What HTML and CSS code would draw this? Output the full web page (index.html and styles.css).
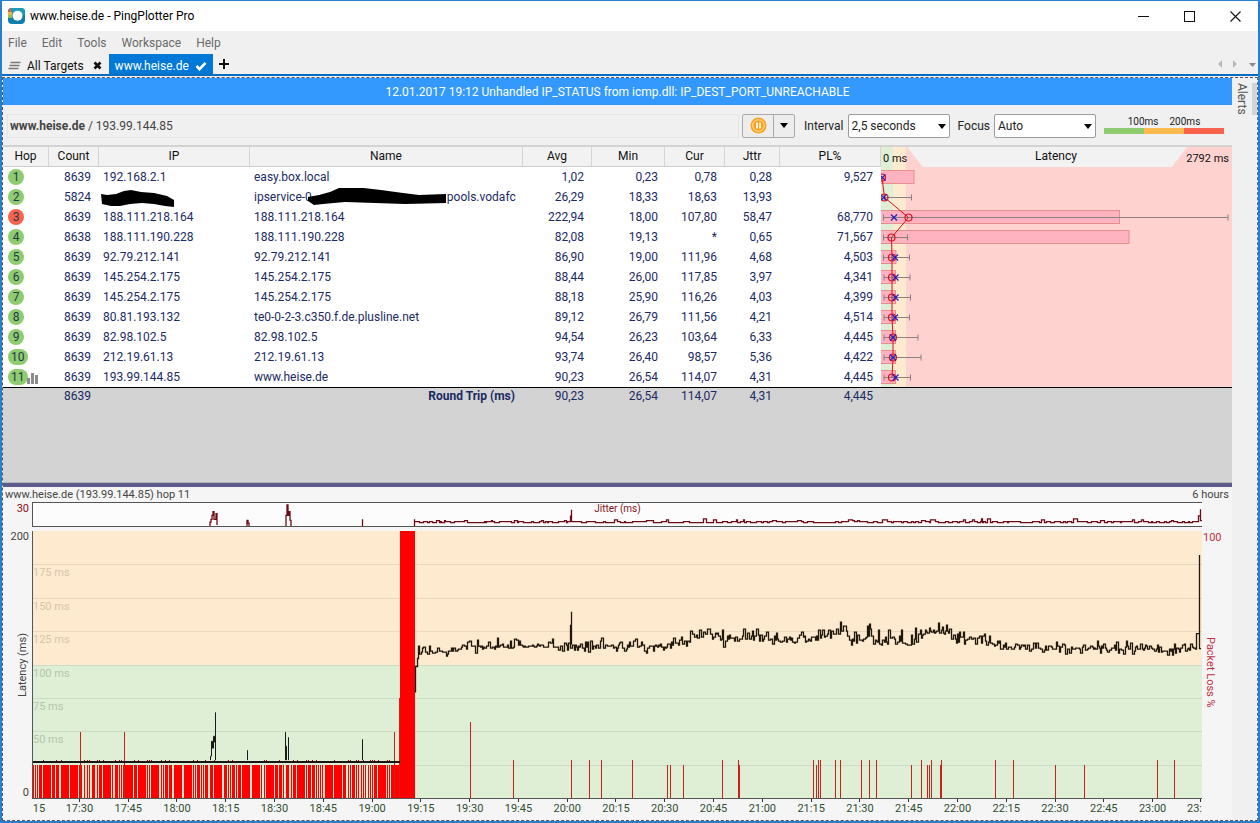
FILE: index.html
```html
<!DOCTYPE html>
<html lang="en">
<head>
<meta charset="utf-8">
<title>www.heise.de - PingPlotter Pro</title>
<link rel="stylesheet" href="styles.css">
</head>
<body>
<div class="window">
  <header class="titlebar">
    <svg class="logo" viewBox="0 0 17 17" width="17" height="17">
      <rect x="0" y="0" width="17" height="16" rx="4" fill="#127fae"/>
      <path d="M4 0h9a4 4 0 0 1 4 4v3H0V4a4 4 0 0 1 4-4z" fill="#1b9bb8"/>
      <path d="M0 5V4a4 4 0 0 1 3-3.900V5z" fill="#e2603f"/>
      <rect x="0" y="4" width="4" height="3" fill="#f2b43c"/>
      <rect x="0" y="7" width="4" height="3" fill="#8fc35a"/>
      <circle cx="9.500" cy="7.800" r="5" fill="#fff"/>
    </svg>
    <h1 class="title">www.heise.de - PingPlotter Pro</h1>
    <div class="winbtns">
      <button class="winbtn" aria-label="Minimize"><svg width="11" height="11"><path d="M0 5.500h11" stroke="#111"/></svg></button>
      <button class="winbtn" aria-label="Maximize"><svg width="11" height="11"><rect x=".5" y=".5" width="10" height="10" fill="none" stroke="#111"/></svg></button>
      <button class="winbtn" aria-label="Close"><svg width="11" height="11"><path d="M.5.5l10 10M10.500.5l-10 10" stroke="#111" stroke-width="1.100"/></svg></button>
    </div>
  </header>
  <nav class="menu">
    <button>File</button><button>Edit</button><button>Tools</button><button>Workspace</button><button>Help</button>
  </nav>
  <div class="tabs">
    <button class="tab">
      <svg width="13" height="10"><path d="M2.500 1.500h10M1.500 4.500h10M.5 7.500h10" stroke="#777" stroke-width="1.500"/></svg>
      All Targets
      <svg class="tabend" width="9" height="9"><path d="M1.500 1.500l6 6M7.500 1.500l-6 6" stroke="#111" stroke-width="2.600"/></svg>
    </button>
    <button class="tab active">
      www.heise.de
      <svg width="12" height="10"><path d="M1.500 5l3 3.200L10.500 1.800" fill="none" stroke="#fff" stroke-width="2.600"/></svg>
    </button>
    <button class="plus" aria-label="New tab"><svg width="10" height="10"><path d="M0 5h10M5 0v10" stroke="#111" stroke-width="2"/></svg></button>
    <div class="tabnav">
      <svg width="40" height="10"><path d="M4 1v8L0 5zM15 1v8l4-4z" fill="#b9b9b9"/><path d="M31 4h7l-3.500 4z" fill="#8a8a8a"/></svg>
    </div>
  </div>

  <div class="body">
    <main class="main">
      <div class="banner">12.01.2017 19:12 Unhandled IP_STATUS from icmp.dll: IP_DEST_PORT_UNREACHABLE</div>
      <div class="toolbar">
        <div class="target"><b>www.heise.de</b> / 193.99.144.85</div>
        <div class="split">
          <button class="pause" aria-label="Pause"><svg width="17" height="17"><circle cx="8.500" cy="8.500" r="8" fill="#fba31c"/><circle cx="8.500" cy="8.500" r="5.800" fill="none" stroke="#fff" stroke-opacity=".7"/><path d="M7 5.500v6M10 5.500v6" stroke="#fff" stroke-width="1.600"/></svg></button>
          <button class="drop" aria-label="More"><span class="tri"></span></button>
        </div>
        <label for="interval">Interval</label>
        <span class="combo"><select id="interval"><option>2,5 seconds</option></select></span>
        <label for="focus">Focus</label>
        <span class="combo"><select id="focus"><option>Auto</option></select></span>
        <div class="scale">
          <div class="scaletext"><span>100ms</span><span>200ms</span></div>
          <div class="scalebar"><i class="good"></i><i class="warn"></i><i class="bad"></i></div>
        </div>
      </div>

      <section class="trace">
        <table class="hops">
          <colgroup><col class="c-hop"><col class="c-count"><col class="c-ip"><col class="c-name"><col class="c-avg"><col class="c-min"><col class="c-cur"><col class="c-jttr"><col class="c-pl"></colgroup>
          <thead><tr><th>Hop</th><th>Count</th><th>IP</th><th>Name</th><th>Avg</th><th>Min</th><th>Cur</th><th>Jttr</th><th>PL%</th></tr></thead>
          <tbody>
            <tr><td><span class="hop">1</span></td><td>8639</td><td>192.168.2.1</td><td>easy.box.local</td><td>1,02</td><td>0,23</td><td>0,78</td><td>0,28</td><td>9,527</td></tr>
            <tr><td><span class="hop">2</span></td><td>5824</td>
              <td><svg class="mark" width="74" height="18" viewBox="0 0 74 18"><path d="M0 5l6 1 9-1 8-3 7-1 10 2 13 1 13 3 7 4v7l-9-1-11-2-12-1-12 1-10 2-9 0-9-2z"/></svg></td>
              <td><span class="masked">ipservice-0<svg class="mark name" width="138" height="18" viewBox="0 0 138 18"><path d="M0 9l11-2 11-3 9-4 16-1 26 3 22 3 16 2 27-1v9l-41 1-60-2-22 2-9 1-6-4z"/></svg>pools.vodafc</span></td>
              <td>26,29</td><td>18,33</td><td>18,63</td><td>13,93</td><td></td></tr>
            <tr><td><span class="hop bad">3</span></td><td>8639</td><td>188.111.218.164</td><td>188.111.218.164</td><td>222,94</td><td>18,00</td><td>107,80</td><td>58,47</td><td>68,770</td></tr>
            <tr><td><span class="hop">4</span></td><td>8638</td><td>188.111.190.228</td><td>188.111.190.228</td><td>82,08</td><td>19,13</td><td>*</td><td>0,65</td><td>71,567</td></tr>
            <tr><td><span class="hop">5</span></td><td>8639</td><td>92.79.212.141</td><td>92.79.212.141</td><td>86,90</td><td>19,00</td><td>111,96</td><td>4,68</td><td>4,503</td></tr>
            <tr><td><span class="hop">6</span></td><td>8639</td><td>145.254.2.175</td><td>145.254.2.175</td><td>88,44</td><td>26,00</td><td>117,85</td><td>3,97</td><td>4,341</td></tr>
            <tr><td><span class="hop">7</span></td><td>8639</td><td>145.254.2.175</td><td>145.254.2.175</td><td>88,18</td><td>25,90</td><td>116,26</td><td>4,03</td><td>4,399</td></tr>
            <tr><td><span class="hop">8</span></td><td>8639</td><td>80.81.193.132</td><td>te0-0-2-3.c350.f.de.plusline.net</td><td>89,12</td><td>26,79</td><td>111,56</td><td>4,21</td><td>4,514</td></tr>
            <tr><td><span class="hop">9</span></td><td>8639</td><td>82.98.102.5</td><td>82.98.102.5</td><td>94,54</td><td>26,23</td><td>103,64</td><td>6,33</td><td>4,445</td></tr>
            <tr><td><span class="hop">10</span></td><td>8639</td><td>212.19.61.13</td><td>212.19.61.13</td><td>93,74</td><td>26,40</td><td>98,57</td><td>5,36</td><td>4,422</td></tr>
            <tr><td><span class="hop">11</span><svg class="bars" width="12" height="12"><path d="M0 6h3v6H0zM4 1h3v11H4zM8 3h3v9H8z" fill="#8c8c8c"/></svg></td><td>8639</td><td>193.99.144.85</td><td>www.heise.de</td><td>90,23</td><td>26,54</td><td>114,07</td><td>4,31</td><td>4,445</td></tr>
          </tbody>
          <tfoot><tr><td></td><td>8639</td><td></td><th scope="row">Round Trip (ms)</th><td>90,23</td><td>26,54</td><td>114,07</td><td>4,31</td><td>4,445</td></tr></tfoot>
        </table>
        <div class="latency">
          <svg class="latgraph" id="latgraph" viewBox="0 0 351 240" preserveAspectRatio="none"></svg>
          <div class="lathead"><small>0 ms</small><span>Latency</span><small>2792 ms</small></div>
        </div>
      </section>

      <div class="splitter"></div>

      <section class="timeline">
        <div class="caption"><span>www.heise.de (193.99.144.85) hop 11</span><span>6 hours</span></div>
        <div class="chart">
          <div class="jmax">30</div>
          <div class="jitter"><svg id="jitter" viewBox="0 0 1169 24" preserveAspectRatio="none"></svg><span>Jitter (ms)</span></div>
          <div class="yaxis"><span>200</span><span class="vert up">Latency (ms)</span><span>0</span></div>
          <div class="plot">
            <div class="warn"></div><div class="warn">175 ms</div><div class="warn">150 ms</div><div class="warn">125 ms</div>
            <div>100 ms</div><div>75 ms</div><div>50 ms</div><div>25 ms</div>
            <svg id="plot" viewBox="0 0 1169 268" preserveAspectRatio="none"></svg>
          </div>
          <div class="loss"><span>100</span><span class="vert">Packet Loss %</span></div>
          <div class="xaxis" id="xaxis"></div>
        </div>
      </section>
    </main>
    <aside class="side"><button class="alerts">Alerts</button><span class="handle"></span></aside>
  </div>
</div>
<script src="app.js"></script>
</body>
</html>
```
FILE: styles.css
```css
* { box-sizing: border-box; }
body { margin: 0; font: 12px/20px Roboto, sans-serif; color: #222; }
button { font: inherit; color: inherit; background: none; border: 0; padding: 0; }
svg { display: block; }

.window { min-height: 100vh; display: flex; flex-direction: column; background: #f0f0f0; border: 2px solid #2a7fc9; border-top-width: 1px; }

.titlebar { display: flex; align-items: center; height: 30px; background: #fff; padding-left: 6px; }
.title { flex: 1; margin: 0 0 0 5px; font-size: 12px; font-weight: 400; line-height: 20px; color: #000; }
.winbtns { display: flex; }
.winbtn { width: 46px; height: 30px; display: grid; place-items: center; }

.menu { display: flex; gap: 15px; height: 23px; padding-left: 6px; line-height: 24px; color: #6a6a6a; }

.tabs { display: flex; height: 22px; border-bottom: 2px solid #0a6cbe; color: #111; }
.tab { display: flex; align-items: center; gap: 6px; padding: 3px 7px 0 6px; }
.tab.active { background: #0078d7; color: #fff; padding: 3px 6px 0; }
.tabend { margin-left: 3px; }
.plus { padding: 0 6px; }
.tabnav { margin-left: auto; display: flex; align-items: center; }

.body { flex: 1; display: flex; margin-top: 1px; border: 1px dashed #556; border-right-color: #668; }
.main { flex: 1; min-width: 0; display: flex; flex-direction: column; }
.side { width: 25px; display: flex; padding-top: 5px; }
.alerts { flex: 1; height: 32px; writing-mode: vertical-rl; color: #555; }
.handle { width: 5px; height: 32px; background: #d4d4d8; }

.banner { height: 27px; background: #39f; color: #fff; text-align: center; line-height: 28px; }

.toolbar { display: flex; align-items: center; height: 40px; padding: 1px 8px 0 4px; }
.target { flex: 1; height: 24px; border: 1px solid #e4e6e6; padding-left: 2px; line-height: 23px; color: #444; }
.split { display: flex; width: 53px; height: 24px; margin: 0 9px 0 3px; border: 1px solid #aaa; border-radius: 2px; background: #ededed; }
.pause { flex: 3; display: grid; place-items: center; border-right: 1px solid #aaa; }
.drop { flex: 2; display: grid; place-items: center; }
.tri { border: 4px solid transparent; border-top: 5px solid #000; border-bottom: 0; }
.combo { position: relative; width: 102px; margin: 0 8px 0 4px; }
.combo::after { content: ""; position: absolute; right: 4px; top: 10px; border: 4px solid transparent; border-top: 5px solid #000; border-bottom: 0; pointer-events: none; }
.combo select { display: block; width: 100%; height: 24px; appearance: none; border: 1px solid #9c9c9c; border-radius: 2px; background: #fff; padding: 0 3px; font: 12px Roboto, sans-serif; color: #222; }
.scale { width: 120px; font-size: 10px; line-height: 12px; }
.scaletext { display: flex; justify-content: center; gap: 11px; height: 11px; line-height: 10px; }
.scalebar { display: flex; height: 6px; }
.scalebar i { flex: 1; }
.good { background: #8fcb6f; }
.scalebar .warn { background: #ffba4f; }
.scalebar .bad { background: #f9634d; }

.trace { flex: 1; display: flex; align-items: flex-start; min-height: 300px; border-top: 2px solid #d3d3d3; background: #d3d3d3; }
.hops { width: 878px; table-layout: fixed; border-collapse: separate; border-spacing: 0; color: #1b2a63; }
.c-hop { width: 46px; } .c-count { width: 50px; } .c-ip { width: 151px; } .c-name { width: 273px; }
.c-avg { width: 69px; } .c-min { width: 73px; } .c-cur { width: 60px; } .c-jttr { width: 55px; }
.hops th, .hops td { height: 20px; padding: 0 8px; text-align: right; line-height: 20px; white-space: nowrap; }
.hops thead th { background: #f2f2f2; border-right: 1px solid #d4d4d4; border-bottom: 1px solid #ccc; padding: 0; line-height: 19px; text-align: center; font-weight: 400; color: #111; }
.hops tbody td { background: #fff; padding-top: 1px; line-height: 19px; }
.hops td:nth-child(1) { padding-left: 5px; padding-top: 0; text-align: left; }
.hops td:nth-child(3), .hops td:nth-child(4) { padding-left: 4px; text-align: left; }
.hops td:nth-child(6) { padding-right: 7px; }
.hops tfoot td, .hops tfoot th { border-top: 1px solid #000; padding-bottom: 2px; line-height: 17px; }
.hop { display: inline-block; min-width: 16px; height: 16px; padding: 0 3px; border-radius: 8px; background: #8fcb6f; line-height: 16px; text-align: center; color: #1b3b4b; vertical-align: top; margin-top: 1px; }
.hop.bad { background: #f9634d; }
.bars { display: inline-block; vertical-align: top; margin: 4px 0 0 -1px; }
.mark { margin-left: -2px; overflow: visible; }
.masked { display: flex; width: 262px; height: 19px; overflow: hidden; }
.mark.name { flex: none; margin: 0 1px 0 -4px; }

.latency { flex: 1; min-width: 0; position: relative; height: 241px; border-bottom: 1px solid #000; color: #111; }
.latgraph { width: 100%; height: 240px; }
.lathead { position: absolute; top: 0; left: 0; right: 0; display: flex; justify-content: space-between; padding: 0 3px 0 2px; line-height: 19px; }
.lathead small { width: 60px; font-size: 11px; line-height: 23px; }
.lathead small:last-child { text-align: right; }

.splitter { height: 5px; background: #5d5b8c; border-top: 1px solid #b4b8ba; }

.timeline { background: #f5f5f5; font-size: 11px; color: #444; }
.caption { display: flex; justify-content: space-between; padding: 0 3px 0 2px; height: 15px; line-height: 15px; }
.chart { display: grid; grid-template-columns: 29px minmax(0, 1fr) 30px; grid-template-rows: 25px 4px 268px 21px; }
.jmax { padding: 1px 3px 0 0; text-align: right; line-height: 12px; color: #8a1020; }
.jitter { position: relative; background: #fcfcfc; border: 1px solid #555; border-right: 0; text-align: center; font-size: 10px; line-height: 12px; color: #8a1020; }
.jitter svg { position: absolute; inset: 0; width: 100%; height: 100%; }
.yaxis { grid-row: 3; display: flex; flex-direction: column; align-items: flex-end; justify-content: space-between; padding-right: 3px; line-height: 12px; }
.vert { writing-mode: vertical-rl; }
.vert.up { transform: rotate(180deg); }
.plot { grid-row: 3; position: relative; display: grid; grid-template-rows: repeat(8, 1fr); border-left: 1px solid #555; border-bottom: 1px solid #555; }
.plot div { background: #deefd5; border-top: 1px solid #cbdcc4; color: #b4c6ae; line-height: 16px; min-height: 0; }
.plot .warn { background: #feeacf; border-top-color: #e9d8bf; color: #d6c5ab; }
.plot .warn:first-child { border-top-color: #feeacf; }
.plot svg { position: absolute; inset: 0; width: 100%; height: 100%; }
.loss { grid-row: 3; display: flex; flex-direction: column; align-items: flex-start; padding-left: 1px; line-height: 14px; color: #c03040; }
.loss .vert { margin: auto 0; }
.xaxis { grid-row: 4; grid-column: 2; display: grid; overflow: hidden; grid-template-columns: 23px repeat(23, 1fr) 25px; text-align: center; line-height: 14px; color: #2f4f2f; }
.xaxis span::before { content: ""; display: block; width: 1px; height: 3px; margin: 0 auto; background: #333; }
.xaxis span:first-child::before { background: none; }
.xaxis span:first-child { padding-right: 9px; }
.xaxis span:last-child { padding-left: 10px; text-align: left; }
.xaxis span:last-child::before { margin-right: 1px; }
```
FILE: app.js
```javascript
let seed = 7;
const rnd = () => (seed = (seed * 16807) % 2147483647) / 2147483647;
const rect = (x, y, w, h, fill, extra = '') => `<rect x="${x}" y="${y}" width="${w}" height="${h}" fill="${fill}" ${extra}/>`;

// Per-hop latency: [bar end, whisker start, whisker end, average, current]
const hops = [
  [33, 0, 0, 1, 1.5], [0, 3, 30.5, 3.5, 2.500], [238.5, 2.5, 347, 27.5, 13], [248, 2.5, 26.5, 10.5, null],
  [15, 2.5, 28.5, 11, 14], [14.5, 3, 29, 11, 14.5], [14.5, 3, 29.5, 11, 14.5], [14.5, 3, 28.5, 11, 14],
  [14.5, 3, 37, 12, 12], [14.5, 3, 40, 12, 12], [14.5, 3, 29.5, 11, 14.5]
];
let g = rect(0, 0, 12, 240, '#deefd5') + rect(12, 0, 13, 240, '#feeacf') + rect(25, 0, 326, 240, '#fdd2cf');
g += '<path d="M26 0H306L291 20H42z" fill="#f2f2f2"/>';
hops.forEach((h, i) => {
  const y = 30.5 + i * 20;
  if (h[0]) g += `<rect x="-1" y="${y - 7}" width="${h[0] + 1}" height="13" fill="#ffb2c0" stroke="#e58f8f"/>`;
  if (h[2]) g += `<path d="M${h[1]} ${y}H${h[2]}M${h[1]} ${y - 3}v6M${h[2]} ${y - 3}v6" stroke="#8b8080"/>`;
});
g += `<polyline points="${hops.map((h, i) => h[3] + ',' + (30.5 + i * 20)).join(' ')}" fill="none" stroke="#e0101c"/>`;
hops.forEach((h, i) => {
  const y = 30.5 + i * 20;
  g += `<circle cx="${h[3]}" cy="${y}" r="3.5" fill="none" stroke="#e0101c" stroke-width="1.2"/>`;
  if (h[4] !== null) g += `<path d="M${h[4] - 3} ${y - 3}l6 6m0-6l-6 6" stroke="#2a1cc0" stroke-width="1.2"/>`;
});
document.getElementById('latgraph').innerHTML = g;

// Average level of the latency trace after the outage, as [x, y] pairs
const level = [[387, 122], [400, 121], [430, 117], [470, 115], [630, 116], [653, 111], [668, 105], [678, 101], [693, 110],
  [713, 107], [738, 107], [758, 109], [775, 109], [798, 105], [806, 101], [818, 109], [828, 110], [835, 103], [845, 111],
  [858, 110], [878, 112], [886, 108], [893, 100], [913, 101], [923, 109], [938, 106], [948, 109], [958, 112], [968, 117],
  [1068, 117], [1118, 119], [1165, 119]];
const at = x => {
  let i = 1;
  while (i < level.length - 1 && level[i][0] < x) i++;
  const [a, b] = [level[i - 1], level[i]];
  return a[1] + (b[1] - a[1]) * (x - a[0]) / (b[0] - a[0]);
};

let p = '<g shape-rendering="crispEdges">' + rect(0, 235, 367, 33, '#feeacf');
for (let x = 0; x < 366;) {
  const r = rnd();
  const w = r < .45 ? 1 : r < .8 ? 3 : 8;
  p += rect(x, 235, w, 33, '#f00');
  if (rnd() < .6) p += rect(x, 230, 1, 1, '#a01010');
  x += w + (rnd() < .8 ? 1 : 2);
}
[[47, 202], [91, 202], [361, 202], [366, 168]].forEach(([x, y]) => p += rect(x, y, 1, 268 - y, '#cc2018'));
p += rect(367, 0, 15, 268, '#f00');
[[437, 192], [480, 230], [538, 230], [556, 230], [568, 230], [599, 230], [634, 235], [637, 235], [650, 235], [689, 230], [705, 230], [706, 235],
  [780, 230], [783, 235], [785, 230], [787, 230], [802, 230], [807, 230], [828, 230], [836, 230], [843, 230], [878, 235], [888, 230], [894, 235],
  [896, 235], [898, 230], [907, 235], [908, 230], [962, 230], [980, 230], [1022, 235], [1051, 235], [1124, 230], [1141, 230]]
  .forEach(([x, y]) => p += rect(x, y, 1, 268 - y, '#cc2018'));
p += rect(0, 231, 367, 2, '#181818');
p += '<path d="M177.500 230v-4h1v-15h1v7h1v-12h1v6v-3h1v20M182.500 230v-48M214.500 230v-10M252.500 230v-28v14h1v14M255.500 230v-23M329.500 230v-21" fill="none" stroke="#181818"/></g>';
let d = 'M382.500 162V136H384.500V128H385.500';
for (let x = 386; x < 1165;) {
  const busy = x > 650 && x < 955 ? 1.5 : 1;
  let y = at(x) + (rnd() * 4 - 2) * busy;
  const r = rnd();
  if (r > .72) y -= (2 + rnd() * 5) * busy;
  else if (r < .08) y += 4;
  d += `V${Math.round(y) + .5}H${x + .5}`;
  x += rnd() < .6 ? 1 : 2;
}
d += 'V103H1166.500V24V118H1168';
p += `<path d="${d}M538.500 114V81M537.500 114V94" fill="none" stroke="#20180c" stroke-width="1.3"/>`;
document.getElementById('plot').innerHTML = p;

let j = 'M177 24v-4h1v-3h1v-4h1v-4h1v8h2v-6h1v12M214 24v-6h1v3h1v3M253 24v-11h1v-11h1v11h1v-4h1v9h1v6M329.500 24v-7M381.500 24V17';
for (let x = 382; x < 1166;) {
  let y = 18.5 + rnd() * 1.8;
  if (rnd() > .86) y -= 1 + rnd() * 2;
  j += `V${Math.round(y) + .5}H${x + .5}`;
  x += 1 + Math.floor(rnd() * 4);
}
j += 'V13.500H1167.500V6.500V18.500H1169M538.500 19V7M537.500 19v-6';
document.getElementById('jitter').innerHTML = `<path d="${j}" fill="none" stroke="#6e0a16" stroke-width="1.3"/>`;

const labels = ['15'];
for (let m = 17 * 60 + 30; m <= 23 * 60; m += 15) labels.push(Math.floor(m / 60) + ':' + String(m % 60).padStart(2, '0'));
labels.push('23:');
document.getElementById('xaxis').innerHTML = labels.map(t => `<span>${t}</span>`).join('');
```
